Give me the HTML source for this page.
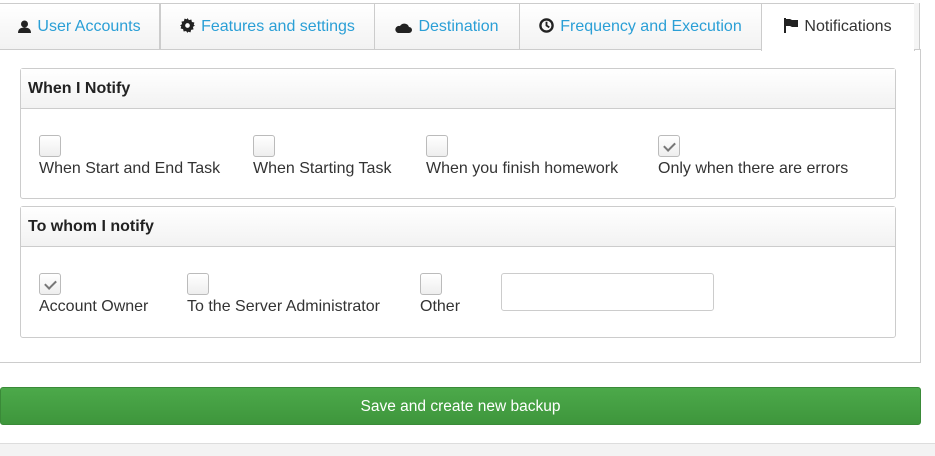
<!DOCTYPE html>
<html><head><style>
*{box-sizing:border-box;margin:0;padding:0}
body{width:935px;height:456px;background:#fff;font-family:"Liberation Sans",sans-serif;position:relative;overflow:hidden;color:#333}
.tab{position:absolute;top:3px;height:47px;border:1px solid #ccc;border-left:none;background:linear-gradient(#fff,#f2f2f2);color:#2a9fd6;font-size:16px;line-height:45px;text-align:center;white-space:nowrap}
.tab svg{vertical-align:-2px;margin-right:6px}
.act{background:#fff;color:#333;border-bottom:none;height:48px}
.panel{position:absolute;left:20px;width:876px;border:1px solid #ccc;border-radius:3px}
.ph{height:40px;border-bottom:1px solid #ccc;background:linear-gradient(#fff,#f2f2f2);font-weight:bold;font-size:16px;line-height:40px;padding-left:7px;color:#222}
.cb{position:absolute;width:22px;height:22px;border:1px solid #bbb;border-radius:3px;background:linear-gradient(#fff,#eee)}
.cb.c::after{content:"";position:absolute;left:7px;top:4px;width:5px;height:9px;border:solid #777;border-width:0 2px 2px 0;transform:rotate(45deg)}
.lb{position:absolute;font-size:16px;white-space:nowrap;color:#333}
</style></head><body>
<div class="tab" style="left:0;width:160px;border-left:none"><svg width="13" height="13" viewBox="0 0 13 13"><circle cx="6.5" cy="4" r="3.5" fill="#222"/><path d="M0 13 Q0 7.5 6.5 7.5 Q13 7.5 13 13Z" fill="#222"/></svg>User Accounts</div>
<div class="tab" style="left:160px;width:215px;border-left:1px solid #ccc"><svg width="15" height="15" viewBox="0 0 16 16"><path d="M8 0l1.5 2.2 2.6-.6.6 2.6 2.6.6-.6 2.6L16 8l-2.2 1.5.6 2.6-2.6.6-.6 2.6-2.6-.6L8 16l-1.5-2.2-2.6.6-.6-2.6-2.6-.6.6-2.6L0 8l2.2-1.5-.6-2.6 2.6-.6.6-2.6 2.6.6z" fill="#222"/><circle cx="8" cy="8" r="2.5" fill="#fff"/></svg>Features and settings</div>
<div class="tab" style="left:375px;width:145px"><svg width="17" height="11" viewBox="0 0 17 11"><path d="M3 11h11a3 3 0 0 0 0-6A5 5 0 0 0 5 4a3.5 3.5 0 0 0-2 7z" fill="#222"/></svg>Destination</div>
<div class="tab" style="left:520px;width:242px"><svg width="15" height="15" viewBox="0 0 16 16"><circle cx="8" cy="8" r="6.5" fill="none" stroke="#222" stroke-width="2.5"/><path d="M8 4v4l3 2" stroke="#222" stroke-width="2" fill="none"/></svg>Frequency and Execution</div>
<div class="tab act" style="left:761px;width:154px;border-left:1px solid #ccc"><svg width="14" height="15" viewBox="0 0 14 15"><rect x="0" y="0" width="2" height="15" fill="#222"/><path d="M2 1h4l2 1h6v7H8L6 8H2z" fill="#222"/></svg>Notifications</div>
<div style="position:absolute;left:914px;top:3px;width:6px;height:47px;border-right:1px solid #ccc;border-bottom:1px solid #ccc;background:#f5f5f5"></div>
<div style="position:absolute;left:0;top:49px;width:921px;height:314px;border-right:1px solid #ccc;border-bottom:1px solid #ccc"></div>
<div style="position:absolute;left:0;top:49px;width:761px;border-top:1px solid #ccc"></div>

<div class="panel" style="top:68px;height:131px"><div class="ph">When I Notify</div></div>
<div class="cb" style="left:39px;top:135px"></div><div class="lb" style="left:39px;top:160px">When Start and End Task</div>
<div class="cb" style="left:253px;top:135px"></div><div class="lb" style="left:253px;top:160px">When Starting Task</div>
<div class="cb" style="left:426px;top:135px"></div><div class="lb" style="left:426px;top:160px">When you finish homework</div>
<div class="cb c" style="left:658px;top:135px"></div><div class="lb" style="left:658px;top:160px">Only when there are errors</div>

<div class="panel" style="top:206px;height:132px"><div class="ph">To whom I notify</div></div>
<div class="cb c" style="left:39px;top:273px"></div><div class="lb" style="left:39px;top:298px">Account Owner</div>
<div class="cb" style="left:187px;top:273px"></div><div class="lb" style="left:187px;top:298px">To the Server Administrator</div>
<div class="cb" style="left:420px;top:273px"></div><div class="lb" style="left:420px;top:298px">Other</div>
<div style="position:absolute;left:501px;top:273px;width:213px;height:38px;border:1px solid #ccc;border-radius:3px"></div>

<div style="position:absolute;left:0;top:387px;width:921px;height:38px;background:linear-gradient(#4ca94a,#3e963c);border:1px solid #3a8a38;border-radius:3px;color:#fff;text-align:center;font-size:15.5px;line-height:37px">Save and create new backup</div>
<div style="position:absolute;left:0;top:443px;width:935px;height:13px;background:#f3f3f3;border-top:1px solid #ddd"></div>
</body></html>
